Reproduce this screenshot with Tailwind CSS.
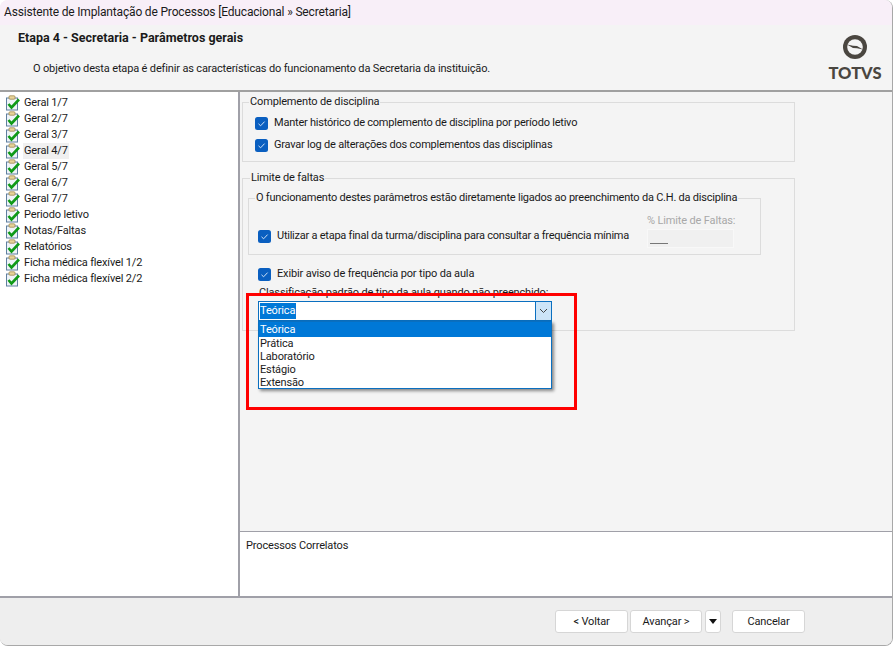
<!DOCTYPE html>
<html lang="pt">
<head>
  <meta charset="UTF-8">
  <title>Assistente de Implantação de Processos</title>
  <script src="https://cdn.jsdelivr.net/npm/@tailwindcss/browser@4"></script>
</head>
<body class="bg-white font-['Roboto','Noto_Sans',sans-serif] text-[11px] tracking-[-0.15px] text-[#1a1a1a]">
  <svg class="hidden">
    <symbol id="task" viewBox="0 0 16 16">
      <rect x="1.5" y="3" width="11" height="12" fill="#eef3f8" stroke="#5f7f9f"/>
      <rect x="4" y="0.8" width="6" height="3.4" rx="1" fill="#e8d49a" stroke="#a08a50" stroke-width="0.8"/>
      <path d="M3.5 9 L6.5 12.5 L14 4.5" fill="none" stroke="#0f9a17" stroke-width="2.6"/>
    </symbol>
    <symbol id="check" viewBox="0 0 13 13">
      <rect width="13" height="13" rx="2.5" fill="#0a5fc0"/>
      <path d="M3.5 6.8 L5.6 8.8 L9.6 4.6" fill="none" stroke="#cfe3f8" stroke-width="1"/>
    </symbol>
  </svg>

  <div class="relative w-[893px] h-[646px] flex flex-col overflow-hidden rounded-[8px] border-r border-b border-[#a8a8a8] bg-[#f4f4f4]">
    <div class="h-[25px] shrink-0 bg-[#f8eff8] pl-1 pt-1 text-[12px] tracking-[-0.17px] leading-4">Assistente de Implantação de Processos [Educacional » Secretaria]</div>

    <header class="h-[67px] shrink-0 flex justify-between border-b-2 border-[#a0a0a0]">
      <div class="pl-[18px]">
        <h1 class="mt-[5px] text-[12.5px] tracking-normal leading-4 font-bold">Etapa 4 - Secretaria - Parâmetros gerais</h1>
        <p class="mt-[15px] pl-[15px] leading-4">O objetivo desta etapa é definir as características do funcionamento da Secretaria da instituição.</p>
      </div>
      <div class="w-[64px] mr-[5px] mt-[10px] flex flex-col items-center text-[#4a4640]">
        <svg class="w-6 h-6" viewBox="0 0 24 24">
          <circle cx="12" cy="12" r="12" fill="currentColor"/>
          <circle cx="12" cy="12" r="7.8" fill="#f4f4f4"/>
          <path d="M4 9.5 L10 10.8 L14 11 L20 14.5 L14 13.2 L10 13 Z" fill="currentColor"/>
        </svg>
        <span class="mt-[4px] text-[16.5px] tracking-normal leading-5 font-black font-['Lato',sans-serif]">TOTVS</span>
      </div>
    </header>

    <div class="flex-1 min-h-0 flex">
      <nav class="w-[240px] shrink-0 bg-white pt-[3px] pl-[5px] border-r-2 border-[#a0a0a8]">
        <ul class="leading-4">
          <li class="flex items-center h-4 gap-[2px]"><svg class="w-4 h-4"><use href="#task"/></svg><span class="px-[1px]">Geral 1/7</span></li>
          <li class="flex items-center h-4 gap-[2px]"><svg class="w-4 h-4"><use href="#task"/></svg><span class="px-[1px]">Geral 2/7</span></li>
          <li class="flex items-center h-4 gap-[2px]"><svg class="w-4 h-4"><use href="#task"/></svg><span class="px-[1px]">Geral 3/7</span></li>
          <li class="flex items-center h-4 gap-[2px]"><svg class="w-4 h-4"><use href="#task"/></svg><span class="px-[1px] bg-[#f0f0f0]">Geral 4/7</span></li>
          <li class="flex items-center h-4 gap-[2px]"><svg class="w-4 h-4"><use href="#task"/></svg><span class="px-[1px]">Geral 5/7</span></li>
          <li class="flex items-center h-4 gap-[2px]"><svg class="w-4 h-4"><use href="#task"/></svg><span class="px-[1px]">Geral 6/7</span></li>
          <li class="flex items-center h-4 gap-[2px]"><svg class="w-4 h-4"><use href="#task"/></svg><span class="px-[1px]">Geral 7/7</span></li>
          <li class="flex items-center h-4 gap-[2px]"><svg class="w-4 h-4"><use href="#task"/></svg><span class="px-[1px]">Periodo letivo</span></li>
          <li class="flex items-center h-4 gap-[2px]"><svg class="w-4 h-4"><use href="#task"/></svg><span class="px-[1px]">Notas/Faltas</span></li>
          <li class="flex items-center h-4 gap-[2px]"><svg class="w-4 h-4"><use href="#task"/></svg><span class="px-[1px]">Relatórios</span></li>
          <li class="flex items-center h-4 gap-[2px]"><svg class="w-4 h-4"><use href="#task"/></svg><span class="px-[1px]">Ficha médica flexível 1/2</span></li>
          <li class="flex items-center h-4 gap-[2px]"><svg class="w-4 h-4"><use href="#task"/></svg><span class="px-[1px]">Ficha médica flexível 2/2</span></li>
        </ul>
      </nav>

      <main class="flex-1 min-w-0 flex flex-col">
        <div class="flex-1 min-h-0 pl-[2px] pt-[2px]">
          <fieldset class="w-[553px] h-[68px] border border-[#dcdcdc] pl-[12px]">
            <legend class="-ml-[6px] px-[1px] leading-4">Complemento de disciplina</legend>
            <label class="mt-[2px] flex items-center gap-[6px] h-[22px] tracking-[-0.22px]"><svg class="w-[13px] h-[13px] shrink-0"><use href="#check"/></svg>Manter histórico de complemento de disciplina por período letivo</label>
            <label class="flex items-center gap-[6px] h-[22px] tracking-[-0.22px]"><svg class="w-[13px] h-[13px] shrink-0"><use href="#check"/></svg>Gravar log de alterações dos complementos das disciplinas</label>
          </fieldset>

          <fieldset class="mt-[8px] w-[553px] h-[161px] border border-[#dcdcdc] pl-[5px]">
            <legend class="ml-[2px] px-[1px] leading-4">Limite de faltas</legend>
            <fieldset class="mt-[4px] w-[513px] min-w-0 h-[65px] border border-[#dcdcdc] pl-[9px] flex items-center">
              <legend class="-ml-[3px] px-[1px] leading-4 whitespace-nowrap tracking-[-0.22px]">O funcionamento destes parâmetros estão diretamente ligados ao preenchimento da C.H. da disciplina</legend>
              <label class="mt-[13px] w-[389px] shrink-0 flex items-center gap-[6px] whitespace-nowrap tracking-[-0.24px]"><svg class="w-[13px] h-[13px] shrink-0"><use href="#check"/></svg>Utilizar a etapa final da turma/disciplina para consultar a frequência mínima</label>
              <div>
                <div class="text-[#a8a8a8] leading-4">% Limite de Faltas:</div>
                <div class="w-[87px] h-[19px] bg-[#f0f0f0] border border-[#f8f8f8] pl-[2px] pt-[2px]"><div class="w-[18px] h-[12px] border-b border-[#777]"></div></div>
              </div>
            </fieldset>
            <label class="mt-[10px] ml-[10px] flex items-center gap-[6px] h-[18px]"><svg class="w-[13px] h-[13px] shrink-0"><use href="#check"/></svg>Exibir aviso de frequência por tipo da aula</label>
            <div class="mt-[2px] ml-[11px] leading-4">Classificação padrão de tipo da aula quando não preenchido:</div>
            <div class="ml-[10px] w-[294px] h-[20px] flex bg-white border border-[#0a6fc0]">
              <span class="flex-1 pl-[1px] pt-[1px]"><span class="bg-[#0078d7] text-white leading-4 inline-block pr-[1px]">Teórica</span></span>
              <span class="w-[16px] bg-[#cce4f7] border-l border-[#0a6fc0] flex items-center justify-center">
                <svg class="w-[9px] h-[6px]" viewBox="0 0 9 6"><path d="M1 1 L4.5 4.5 L8 1" fill="none" stroke="#444"/></svg>
              </span>
            </div>
          </fieldset>
        </div>

        <section class="h-[65px] shrink-0 bg-white border-t border-[#a0a0a8] pl-[6px] pt-[6px] leading-4">Processos Correlatos</section>
      </main>
    </div>

    <footer class="h-[49px] shrink-0 border-t-2 border-[#a0a0a8] bg-[#eeeeee] flex items-start pl-[555px] pt-[12px]">
      <button class="w-[73px] h-[23px] pt-[1px] rounded-[3px] border border-[#d6d6d6] bg-white">&lt; Voltar</button>
      <button class="ml-[2px] w-[72px] h-[23px] pt-[1px] rounded-[3px] border border-[#d6d6d6] bg-white">Avançar &gt;</button>
      <button class="ml-[3px] w-[16px] h-[23px] rounded-[3px] border border-[#d6d6d6] bg-white flex items-center justify-center"><svg class="w-[8px] h-[5px]" viewBox="0 0 8 5"><path d="M0 0 H8 L4 5 Z" fill="#111"/></svg></button>
      <button class="ml-[11px] w-[73px] h-[23px] pt-[1px] rounded-[3px] border border-[#d6d6d6] bg-white">Cancelar</button>
    </footer>

    <ul class="absolute left-[258px] top-[321px] w-[294px] h-[68px] bg-white border border-[#0a6fc0] shadow-[2px_2px_3px_rgba(0,0,0,0.45)] leading-[13px]">
      <li class="bg-[#0078d7] text-white pl-[1px] pt-[1px] h-[15px]">Teórica</li>
      <li class="pl-[1px]">Prática</li>
      <li class="pl-[1px]">Laboratório</li>
      <li class="pl-[1px]">Estágio</li>
      <li class="pl-[1px]">Extensão</li>
    </ul>
    <div class="absolute left-[246px] top-[293px] w-[331px] h-[117px] border-[3px] border-[#ff0000]"></div>
  </div>
</body>
</html>
